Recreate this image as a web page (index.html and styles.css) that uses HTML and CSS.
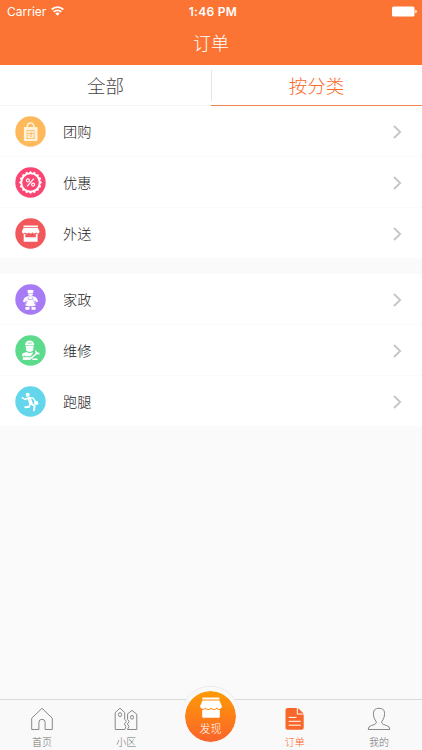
FILE: index.html
```html
<!DOCTYPE html>
<html lang="zh-CN">
<head>
    <meta charset="UTF-8">
    <meta name="viewport" content="width=device-width, initial-scale=1.0">
    <title>订单</title>
    <link rel="stylesheet" href="styles.css">
</head>
<body>
    <div class="app">
        <header class="header">
            <!-- Status bar -->
            <div class="status-bar">
                <div class="carrier">
                    <span>Carrier</span>
                    <svg class="wifi" width="13" height="10" viewBox="0 0 13 10" fill="none" stroke="#fff" stroke-width="1.8">
                        <path d="M.7 3.5a8.2 8.2 0 0 1 11.6 0M2.7 5.9a5.4 5.4 0 0 1 7.6 0"/>
                        <path d="M6.5 9.7L4.3 7.5a3.1 3.1 0 0 1 4.4 0z" fill="#fff" stroke="none"/>
                    </svg>
                </div>
                <div class="time">1:46 PM</div>
                <div class="battery">
                    <svg width="25" height="11" viewBox="0 0 25 11" fill="#fff">
                        <rect x="0" y="0.5" width="22.5" height="10" rx="1.5"/>
                        <path d="M23.3 3.8q1.5.2 1.5 1.7t-1.5 1.7z"/>
                    </svg>
                </div>
            </div>
            <h1 class="title">订单</h1>
        </header>

        <!-- Tabs -->
        <nav class="tabs">
            <a class="tab">全部</a>
            <a class="tab active">按分类</a>
        </nav>

        <!-- Categories -->
        <main class="content">
            <ul class="list">
                <li class="row">
                    <svg class="icon" viewBox="0 0 31 31">
                        <circle cx="15.5" cy="15.5" r="15.2" fill="#fdb95c"/>
                        <path d="M12.3 11.5v-1.2a3.3 3.3 0 0 1 6.6 0v1.2" fill="none" stroke="#fff3dc" stroke-width="1.4"/>
                        <rect x="8.9" y="11" width="13.6" height="14" rx="1" fill="#fff3dc"/>
                        <text class="bag-text" x="15.7" y="21.8" text-anchor="middle">团</text>
                    </svg>
                    <span class="name">团购</span>
                    <svg class="arrow" viewBox="0 0 9 14"><path d="M1 1l6.2 6L1 13"/></svg>
                </li>
                <li class="row">
                    <svg class="icon" viewBox="0 0 31 31">
                        <circle cx="15.5" cy="15.5" r="15.2" fill="#fb4572"/>
                        <g fill="#fff">
                            <rect x="7.3" y="7.3" width="16.4" height="16.4"/>
                            <rect x="7.3" y="7.3" width="16.4" height="16.4" transform="rotate(22.5 15.5 15.5)"/>
                            <rect x="7.3" y="7.3" width="16.4" height="16.4" transform="rotate(45 15.5 15.5)"/>
                            <rect x="7.3" y="7.3" width="16.4" height="16.4" transform="rotate(67.5 15.5 15.5)"/>
                        </g>
                        <circle cx="15.5" cy="15.5" r="8.3" fill="#fb4572"/>
                        <g fill="none" stroke="#fff" stroke-width="1.2">
                            <path d="M18.9 11.6l-6.8 7.8"/>
                            <circle cx="12.9" cy="13.4" r="1.5"/>
                            <circle cx="18.1" cy="17.6" r="1.5"/>
                        </g>
                    </svg>
                    <span class="name">优惠</span>
                    <svg class="arrow" viewBox="0 0 9 14"><path d="M1 1l6.2 6L1 13"/></svg>
                </li>
                <li class="row">
                    <svg class="icon" viewBox="0 0 31 31">
                        <circle cx="15.5" cy="15.5" r="15.2" fill="#f2575b"/>
                        <g fill="#fff">
                            <rect x="8.4" y="7.5" width="14.6" height="1.6" rx=".5"/>
                            <path d="M8.6 9.8h14.2l1.8 3.7q-.2 2-1.8 2t-1.8-1.2q-.4 1.2-1.8 1.2t-1.8-1.2q-.4 1.2-1.8 1.2t-1.8-1.2q-.4 1.2-1.8 1.2t-1.8-1.2q-.4 1.2-1.8 1.2t-1.6-2z"/>
                            <path d="M8.7 16h1.7v3.3h10.4V16h1.8v7.8H8.7z"/>
                        </g>
                    </svg>
                    <span class="name">外送</span>
                    <svg class="arrow" viewBox="0 0 9 14"><path d="M1 1l6.2 6L1 13"/></svg>
                </li>
            </ul>

            <ul class="list">
                <li class="row">
                    <svg class="icon" viewBox="0 0 31 31">
                        <circle cx="15.5" cy="15.5" r="15.2" fill="#a77af6"/>
                        <g fill="#fff">
                            <path d="M12.4 6.3q3.1-1.3 6.2 0l-.5 2.7h-5.2z"/>
                            <path d="M13 9.5h5q0 2.5-2.5 2.5T13 9.5z"/>
                            <path d="M12.5 12.3h6q3.8.9 4.6 5.4l-2 .5-1.3-2.4.8 5.7q-5.1 1.7-10.2 0l.8-5.7-1.3 2.4-2-.5q.8-4.5 4.6-5.4z"/>
                            <path d="M10.8 23h3.7v2.7h-4q-.8-1.5.3-2.7zM16.5 23h3.7q1.1 1.2.3 2.7h-4z"/>
                        </g>
                        <path d="M13.2 13.2v2.2h4.6v-2.2M12.3 16.3l-1.1 4M18.7 16.3l1.1 4" fill="none" stroke="#a77af6" stroke-width=".6"/>
                    </svg>
                    <span class="name">家政</span>
                    <svg class="arrow" viewBox="0 0 9 14"><path d="M1 1l6.2 6L1 13"/></svg>
                </li>
                <li class="row">
                    <svg class="icon" viewBox="0 0 31 31">
                        <circle cx="15.5" cy="15.5" r="15.2" fill="#5cdb8d"/>
                        <g fill="#fff">
                            <path d="M10.2 9.3q.5-3.5 4.4-3.7 4 .2 4.5 3.7v.9h-8.9z"/>
                            <path d="M10.6 10.8h8.1l-.5 4.7q-3.5 2.8-7.1 0z"/>
                            <path d="M7.2 18.5l4.4-1.5q2.8 2 5.3.2l1.3.6-2.5 3.4H9.5v-1.4l-.7 1.4H7.2z"/>
                            <path d="M7.8 22.2h7.9v2.7H7.8z"/>
                        </g>
                        <path d="M15.8 23.3l5.8-4.8M20.8 15.6q-.2 3.2 3.6 3M17.3 24.2h5.2" fill="none" stroke="#fff" stroke-width="1.6"/>
                        <path d="M12.5 8.1h4.4" stroke="#5cdb8d" stroke-width=".7"/>
                    </svg>
                    <span class="name">维修</span>
                    <svg class="arrow" viewBox="0 0 9 14"><path d="M1 1l6.2 6L1 13"/></svg>
                </li>
                <li class="row">
                    <svg class="icon" viewBox="0 0 31 31">
                        <circle cx="15.5" cy="15.5" r="15.2" fill="#63d6ec"/>
                        <circle cx="12.7" cy="8.8" r="2" fill="#fff"/>
                        <g fill="none" stroke="#fff" stroke-linecap="round" stroke-linejoin="round">
                            <path d="M14.2 12.6l1.6 4.4" stroke-width="3.6"/>
                            <path d="M13 12l-3 1.5-2.8-1.8M14.8 11.6l3.5.7 2 2.8" stroke-width="1.4"/>
                            <path d="M15.3 17.5l-1.1 3.3-3.9.4M16.2 17.5l3.4 2.5-.6 4.4" stroke-width="1.9"/>
                        </g>
                        <path d="M18.7 15.7l3.7-.9 1.2 3.5-3.7 1z" fill="#fff"/>
                    </svg>
                    <span class="name">跑腿</span>
                    <svg class="arrow" viewBox="0 0 9 14"><path d="M1 1l6.2 6L1 13"/></svg>
                </li>
            </ul>
        </main>

        <!-- Bottom navigation -->
        <footer class="tab-bar">
            <a class="tab-item">
                <svg width="24" height="24" viewBox="0 0 24 24">
                    <path d="M1.7 22.5V11.2L12 1.3l10.3 9.9v11.3h-7.2v-7.3q0-2.9-3.1-2.9t-3.1 2.9v7.3z"/>
                </svg>
                <span>首页</span>
            </a>
            <a class="tab-item">
                <svg width="24" height="24" viewBox="0 0 24 24">
                    <path d="M1.2 22.5V5.5L6 1.2l4.7 4.3v6.8l1.7 2.2-2 2.6 1.5 2.2-1 3.2zM13.4 22.5l1.6-3-1.6-2.5 1.9-2.5-1.7-2V6.8L18 3.4l4.8 3.9v15.2z"/>
                    <ellipse cx="6" cy="7.6" rx="1.6" ry="2"/>
                    <ellipse cx="18" cy="10.3" rx="1.5" ry="1.9"/>
                </svg>
                <span>小区</span>
            </a>
            <a class="tab-item discover">
                <span class="discover-button">
                    <svg width="24" height="22" viewBox="0 0 24 22">
                        <rect x="3.2" y=".4" width="17.4" height="2.2" rx=".8"/>
                        <path d="M3.5 3.5h16.9l2.6 5.8q-.3 2.7-2.6 2.7-1.7 0-2.6-1.5Q17 12 15 12t-2.9-1.5Q11.2 12 9.2 12t-2.8-1.5Q5.5 12 3.8 12 1.5 12 1 9.3z"/>
                        <path d="M3.2 13.1q1.8 0 3.2-1.1 2.8 2 5.7 0 2.8 2 5.7 0 1.3 1.1 3 1.1v6.6q0 1-1 1H4.2q-1 0-1-1z"/>
                    </svg>
                    <span>发现</span>
                </span>
            </a>
            <a class="tab-item active">
                <svg width="24" height="24" viewBox="0 0 24 24">
                    <path class="solid" d="M4.5 1h9.3v6.6h6.9v13.2q0 2-2 2H4.5q-2 0-2-2V3q0-2 2-2z"/>
                    <path class="solid" d="M14.9 1l5.8 5.6h-5.8z"/>
                    <path class="lines" d="M5.7 10.4h7.8M5.7 14.3h12M5.7 18.2h12"/>
                </svg>
                <span>订单</span>
            </a>
            <a class="tab-item">
                <svg width="24" height="24" viewBox="0 0 24 24">
                    <path d="M1.2 22.5q0-3 3-3.9 4.7-1.2 5.1-2.6.2-1.6-1.2-3.2-1.7-2.2-1.7-6.5 0-5 5.6-5t5.6 5q0 4.3-1.7 6.5-1.4 1.6-1.2 3.2.4 1.4 5.1 2.6 3 .9 3 3.9z"/>
                </svg>
                <span>我的</span>
            </a>
        </footer>
    </div>
</body>
</html>
```
FILE: styles.css
```css
/* General Styling */
* {
    box-sizing: border-box;
}

body {
    margin: 0;
    font-family: "Noto Sans CJK SC", sans-serif;
    font-weight: 300;
    background-color: #fafafa;
}

.app {
    display: flex;
    flex-direction: column;
    height: 750px;
    overflow: hidden;
}

/* Header */
.header {
    height: 65px;
    background-color: #fb7434;
    color: #fff;
}

.status-bar {
    display: grid;
    grid-template-columns: 1fr auto 1fr;
    align-items: center;
    height: 22px;
    padding: 0 5px 0 7px;
    font-family: Inter, sans-serif;
    font-size: 12px;
    font-weight: 400;
}

.carrier {
    display: flex;
    align-items: center;
    gap: 5px;
}

.time {
    padding-left: 2px;
    font-weight: 600;
    letter-spacing: 0.3px;
}

.battery {
    display: flex;
    justify-content: flex-end;
}

.title {
    margin: 0;
    font-size: 18px;
    font-weight: 300;
    line-height: 41px;
    text-align: center;
}

/* Tabs */
.tabs {
    display: flex;
    height: 41px;
    background-color: #fff;
}

.tab {
    flex: 1;
    border-bottom: 1px solid #f5f5f5;
    color: #444;
    font-size: 18.5px;
    line-height: 41px;
    text-align: center;
}

.tab.active {
    border-bottom-color: #f2854f;
    background: linear-gradient(#e4e4e4, #e4e4e4) 0 5px / 1px 31px no-repeat;
    color: #f76b2c;
}

/* List */
.content {
    flex: 1;
}

.list {
    margin: 0 0 15px;
    padding: 0;
    list-style: none;
    background-color: #fff;
}

.row {
    display: flex;
    align-items: center;
    height: 51px;
    padding: 1px 20px 0 15px;
    border-bottom: 1px solid #fbfbfb;
}

.icon {
    width: 31px;
    height: 31px;
}

.bag-text {
    font-size: 9.5px;
    font-weight: 400;
    fill: #fdb95c;
}

.name {
    flex: 1;
    margin: 0 0 2px 17px;
    color: #222;
    font-size: 14.2px;
    line-height: 20px;
}

.arrow {
    width: 9px;
    height: 14px;
    fill: none;
    stroke: #c5c5c9;
    stroke-width: 1.8;
}

/* Bottom navigation */
.tab-bar {
    display: flex;
    height: 51px;
    padding-right: 1px;
    border-top: 1px solid #d9d9d9;
    background-color: #f9f9f9;
}

.tab-item {
    display: flex;
    flex: 1;
    flex-direction: column;
    align-items: center;
    padding-top: 7px;
    color: #707070;
    font-size: 10px;
    line-height: 14px;
}

.tab-item svg {
    flex: none;
    margin-bottom: 4px;
    fill: none;
    stroke: #888;
    stroke-width: 1;
}

.tab-item.active {
    color: #f8662a;
}

.tab-item .solid {
    fill: #f8662a;
    stroke: none;
}

.tab-item .lines {
    stroke: #fff;
    stroke-width: 1;
}

.tab-item.discover {
    padding: 0;
}

.discover-button {
    display: flex;
    flex: none;
    flex-direction: column;
    align-items: center;
    width: 59px;
    height: 59px;
    margin-top: -13px;
    padding-top: 6px;
    border: 4px solid #f9f9f9;
    border-radius: 50%;
    background: linear-gradient(#fe9a05, #fa642b) padding-box;
    box-shadow: 0 -1px 1px #e8e8e8;
    color: #fff;
    font-size: 11px;
}

.tab-item .discover-button svg {
    margin-bottom: 2px;
    fill: #fff;
    stroke: none;
}
```
